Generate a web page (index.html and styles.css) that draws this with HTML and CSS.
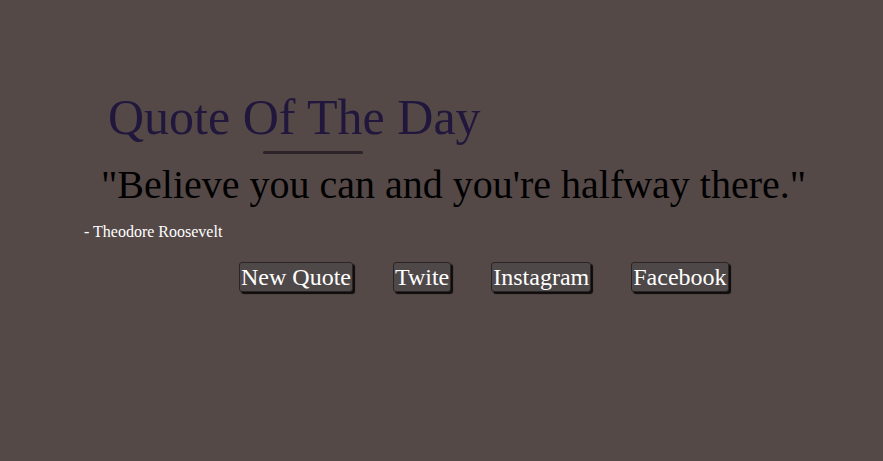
FILE: index.html
```html
<!DOCTYPE html>
<html>
<head>
<meta charset="utf-8">
<link rel="stylesheet" href="styles.css">
</head>
<body>
<main class="card">
  <h1 class="title">Quote Of The Day</h1>
  <div class="rule"></div>
  <p class="quote">"Believe you can and you're halfway there."</p>
  <p class="author">- Theodore Roosevelt</p>
  <div class="actions">
    <button class="btn">New Quote</button>
    <button class="btn">Twite</button>
    <button class="btn">Instagram</button>
    <button class="btn">Facebook</button>
  </div>
</main>
</body>
</html>
```
FILE: styles.css
```css
html, body {
  margin: 0;
  padding: 0;
  background: #554948;
  height: 100%;
}
body {
  font-family: "Liberation Serif", "Times New Roman", serif;
}
.card {
  padding-top: 87px;
  display: flex;
  flex-direction: column;
  align-items: flex-start;
}
.title {
  margin: 0 0 0 108px;
  font-size: 50px;
  font-weight: normal;
  line-height: 60px;
  color: #21173d;
}
.rule {
  margin: 4px 0 0 263px;
  width: 100px;
  height: 3px;
  border-radius: 2px;
  background: #2c2428;
}
.quote {
  margin: 8px 0 0 101px;
  font-size: 40px;
  line-height: 46px;
  color: #000;
}
.author {
  margin: 15px 0 0 84px;
  font-size: 16px;
  line-height: 18px;
  color: #fff;
}
.actions {
  margin: 21px 0 0 239px;
  display: flex;
  gap: 40px;
}
.btn {
  font-family: "Liberation Serif", "Times New Roman", serif;
  font-size: 24px;
  line-height: 28px;
  color: #fff;
  background: #4f4848;
  border: 1px solid #2a2424;
  border-radius: 3px;
  box-shadow: 2px 2px 1px #0d0b0b;
  padding: 0 1px;
  cursor: pointer;
}
```
